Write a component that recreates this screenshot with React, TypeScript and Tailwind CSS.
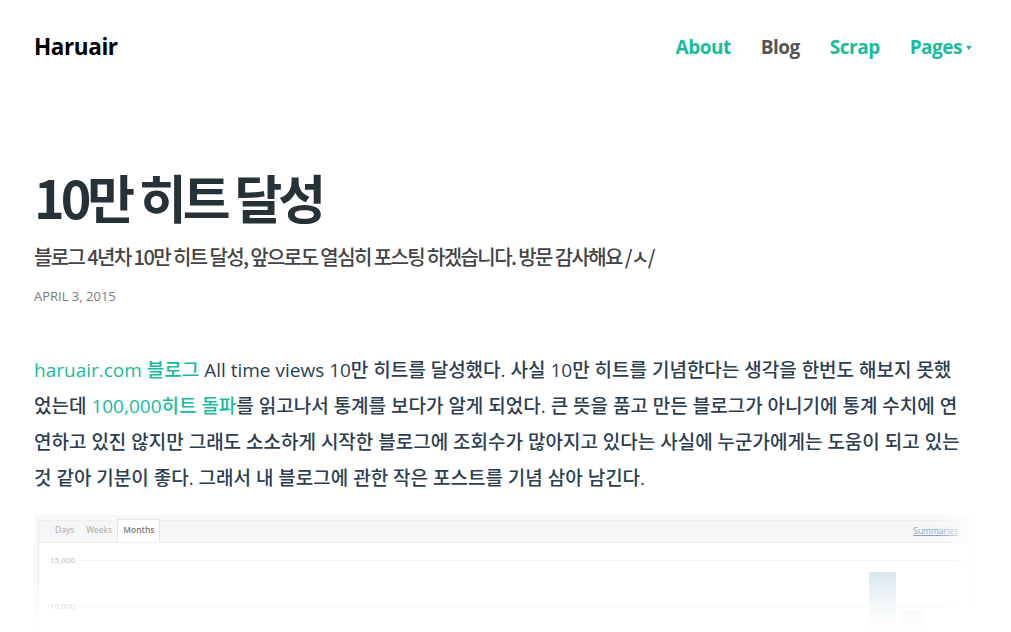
import React from 'react';

const navItems = [
  { label: 'About', active: false },
  { label: 'Blog', active: true },
  { label: 'Scrap', active: false },
  { label: 'Pages', active: false, dropdown: true },
];

const StatsWidget: React.FC = () => (
  <div className="relative mt-[19px] h-[118px] overflow-hidden bg-[#f8f8f8] px-[4px] pt-[5px]">
    <div className="border border-[#eeeeee] bg-white">
      {/* tab bar */}
      <div className="flex h-[22px] items-end border-b border-[#ececec] bg-[#f6f6f6] pl-[9px] font-['Open_Sans',sans-serif] text-[8.5px]">
        <span className="px-[7px] pb-[5px] text-[#a9a9a9]">Days</span>
        <span className="px-[5px] pb-[5px] text-[#a9a9a9]">Weeks</span>
        <span className="border border-b-0 border-[#e4e4e4] bg-white px-[5px] pt-[4px] pb-[5px] font-semibold text-[#777]">
          Months
        </span>
        <span className="ml-auto mr-[14px] self-center text-[#8da3bd] underline">Summaries</span>
      </div>
      {/* chart */}
      <div className="relative h-[90px] font-['Open_Sans',sans-serif] text-[8px] text-[#b5b5b5]">
        <div className="flex items-center pt-[11px]">
          <span className="w-[36px] text-right">15,000</span>
          <div className="ml-[4px] mr-[8px] h-px flex-1 bg-[#f0f0f0]" />
        </div>
        <div className="flex items-center pt-[34px]">
          <span className="w-[36px] text-right">10,000</span>
          <div className="ml-[4px] mr-[8px] h-px flex-1 bg-[#f0f0f0]" />
        </div>
        <div className="absolute left-[830px] top-[29px] h-[60px] w-[27px] bg-gradient-to-b from-[#dbe8ee] to-[#f3f7f9]" />
        <div className="absolute left-[861px] top-[67px] h-[20px] w-[25px] bg-[#eef3f6]" />
      </div>
    </div>
    {/* fade overlays */}
    <div className="pointer-events-none absolute inset-0 bg-gradient-to-b from-transparent from-[55%] to-white" />
    <div className="pointer-events-none absolute inset-y-0 right-0 w-[40px] bg-gradient-to-r from-transparent to-white" />
  </div>
);

export default function App() {
  return (
    <div className="min-h-screen bg-white font-['Open_Sans','Noto_Sans_CJK_KR',sans-serif] text-[#2c3e50]">
      <nav className="flex h-[94px] items-center justify-between px-[34px]">
        <a className="text-[22.5px] font-bold tracking-[-0.4px] text-black">Haruair</a>
        <ul className="mr-[-10px] flex items-center">
          {navItems.map((item) => (
            <li
              key={item.label}
              className={`flex items-center px-[15px] text-[19px] font-bold tracking-[-0.5px] ${
                item.active ? 'text-[#555555]' : 'text-[#18bc9c]'
              }`}
            >
              {item.label}
              {item.dropdown && (
                <span className="ml-[4px] mt-[2px] inline-block border-x-[3.5px] border-t-[4px] border-x-transparent border-t-[#18bc9c]" />
              )}
            </li>
          ))}
        </ul>
      </nav>

      <main className="px-[34px]">
        <h1 className="mt-[74px] font-['Noto_Sans_CJK_KR',sans-serif] text-[52px] font-bold leading-[57px] tracking-[-4px] text-[#263238]">
          10만 히트 달성
        </h1>
        <h2 className="mt-[17px] font-['Noto_Sans_CJK_KR',sans-serif] text-[20px] font-medium leading-[30px] tracking-[-1.6px] text-[#444444]">
          블로그 4년차 10만 히트 달성, 앞으로도 열심히 포스팅 하겠습니다. 방문 감사해요 /ㅅ/
        </h2>
        <p className="mt-[14px] text-[13px] font-medium leading-[20px] text-[#7b7b7b]">APRIL 3, 2015</p>

        <p className="mt-[46px] text-[19px] font-medium leading-[36px] text-[#2c3e50]">
          <a className="text-[#18bc9c]">haruair.com 블로그</a> All time views 10만 히트를 달성했다. 사실 10만 히트를
          기념한다는 생각을 한번도 해보지 못했
          <br />
          었는데 <a className="text-[#18bc9c]">100,000히트 돌파</a>를 읽고나서 통계를 보다가 알게 되었다. 큰 뜻을 품고
          만든 블로그가 아니기에 통계 수치에 연
          <br />
          연하고 있진 않지만 그래도 소소하게 시작한 블로그에 조회수가 많아지고 있다는 사실에 누군가에게는 도움이 되고
          있는
          <br />
          것 같아 기분이 좋다. 그래서 내 블로그에 관한 작은 포스트를 기념 삼아 남긴다.
        </p>

        <StatsWidget />
      </main>
    </div>
  );
}
